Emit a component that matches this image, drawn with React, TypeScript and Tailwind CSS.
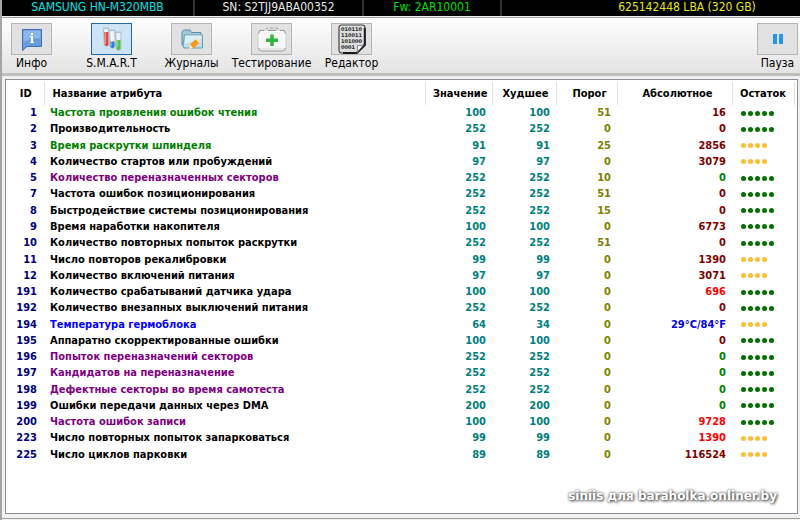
import type { ReactNode } from 'react'

type Row = {
  id: number
  name: string
  tone?: 'green' | 'purple' | 'blue'
  value: number
  worst: number
  threshold: number
  raw: string
  rawTone?: 'green' | 'red' | 'blue'
  dots: 4 | 5
}

const rows: Row[] = [
  { id: 1, name: 'Частота проявления ошибок чтения', tone: 'green', value: 100, worst: 100, threshold: 51, raw: '16', dots: 5 },
  { id: 2, name: 'Производительность', value: 252, worst: 252, threshold: 0, raw: '0', dots: 5 },
  { id: 3, name: 'Время раскрутки шпинделя', tone: 'green', value: 91, worst: 91, threshold: 25, raw: '2856', dots: 4 },
  { id: 4, name: 'Количество стартов или пробуждений', value: 97, worst: 97, threshold: 0, raw: '3079', dots: 4 },
  { id: 5, name: 'Количество переназначенных секторов', tone: 'purple', value: 252, worst: 252, threshold: 10, raw: '0', rawTone: 'green', dots: 5 },
  { id: 7, name: 'Частота ошибок позиционирования', value: 252, worst: 252, threshold: 51, raw: '0', dots: 5 },
  { id: 8, name: 'Быстродействие системы позиционирования', value: 252, worst: 252, threshold: 15, raw: '0', dots: 5 },
  { id: 9, name: 'Время наработки накопителя', value: 100, worst: 100, threshold: 0, raw: '6773', dots: 5 },
  { id: 10, name: 'Количество повторных попыток раскрутки', value: 252, worst: 252, threshold: 51, raw: '0', dots: 5 },
  { id: 11, name: 'Число повторов рекалибровки', value: 99, worst: 99, threshold: 0, raw: '1390', dots: 4 },
  { id: 12, name: 'Количество включений питания', value: 97, worst: 97, threshold: 0, raw: '3071', dots: 4 },
  { id: 191, name: 'Количество срабатываний датчика удара', value: 100, worst: 100, threshold: 0, raw: '696', rawTone: 'red', dots: 5 },
  { id: 192, name: 'Количество внезапных выключений питания', value: 252, worst: 252, threshold: 0, raw: '0', dots: 5 },
  { id: 194, name: 'Температура гермоблока', tone: 'blue', value: 64, worst: 34, threshold: 0, raw: '29°C/84°F', rawTone: 'blue', dots: 4 },
  { id: 195, name: 'Аппаратно скорректированные ошибки', value: 100, worst: 100, threshold: 0, raw: '0', dots: 5 },
  { id: 196, name: 'Попыток переназначений секторов', tone: 'purple', value: 252, worst: 252, threshold: 0, raw: '0', rawTone: 'green', dots: 5 },
  { id: 197, name: 'Кандидатов на переназначение', tone: 'purple', value: 252, worst: 252, threshold: 0, raw: '0', rawTone: 'green', dots: 5 },
  { id: 198, name: 'Дефектные секторы во время самотеста', tone: 'purple', value: 252, worst: 252, threshold: 0, raw: '0', rawTone: 'green', dots: 5 },
  { id: 199, name: 'Ошибки передачи данных через DMA', value: 200, worst: 200, threshold: 0, raw: '0', rawTone: 'green', dots: 5 },
  { id: 200, name: 'Частота ошибок записи', tone: 'purple', value: 100, worst: 100, threshold: 0, raw: '9728', rawTone: 'red', dots: 5 },
  { id: 223, name: 'Число повторных попыток запарковаться', value: 99, worst: 99, threshold: 0, raw: '1390', rawTone: 'red', dots: 4 },
  { id: 225, name: 'Число циклов парковки', value: 89, worst: 89, threshold: 0, raw: '116524', dots: 4 },
]

const nameTones = {
  green: 'text-[#008000]',
  purple: 'text-[#800080]',
  blue: 'text-[#0000ff]',
}

const rawTones = {
  green: 'text-[#008000]',
  red: 'text-[#ff0000]',
  blue: 'text-[#0000e0]',
}

const InfoIcon = () => (
  <svg viewBox="0 0 22 24" className="h-6 w-[22px]">
    <path d="M1.500 2.500h19v17H6l-4.500 4z" fill="#6a9bdc" stroke="#3d6db4" />
    <path d="M2.500 3.500h17v8Q11 10 2.500 15z" fill="#8cb5ea" />
    <path d="M10 6h2v2h-2zM9 9h3v6h1v1H9v-1h1v-5H9z" fill="#fff" />
  </svg>
)

const TubesIcon = () => (
  <svg viewBox="0 0 20 24" className="h-6 w-5">
    <g fill="#eef2f8" stroke="#a5b0c2" strokeWidth="0.8">
      <path d="M1.500 1.500h5l.5 15.500a2.400 2.400 0 0 1-4.800 0z" />
      <path d="M7.800 3.500h5l.2 15.500a2.400 2.400 0 0 1-4.800 0z" />
      <path d="M14 5.500h5l-.1 15.500a2.400 2.400 0 0 1-4.800 0z" />
    </g>
    <path d="M2.200 5h4l.3 12a1.900 1.900 0 0 1-3.800 0z" fill="#dc4a3a" />
    <path d="M8.500 14.500h4v4.500a1.900 1.900 0 0 1-4 0z" fill="#2b78d6" />
    <path d="M14.500 13h4v8a1.900 1.900 0 0 1-4 0z" fill="#4cc44c" />
    <path d="M1 1.200h6M7.300 3.200h6M13.500 5.200h6" stroke="#b4becd" strokeWidth="1.400" />
    <path d="M3.500 3v14M9.700 5v14M15.700 7v13" stroke="#fff" strokeOpacity="0.4" />
  </svg>
)

const FolderIcon = () => (
  <svg viewBox="0 0 24 24" className="size-6">
    <path d="M2 18V5l1.500-2H10l1.500 2.500h9.500V18z" fill="#a3c9d6" stroke="#5a8ea3" />
    <path d="M4.500 8h18v13H4l-1-2z" fill="#bfe0ea" stroke="#5f9db3" />
    <path d="M5 8.500h17v3L5 17z" fill="#dceff4" />
    <path d="m9 22 1.500-5 6-5.500 3.500 3.500-6 6z" fill="#f79a1c" />
    <path d="m15.500 12.500 1.800-1.700 3.500 3.500-1.800 1.700z" fill="#fbe3c3" />
    <path d="m9 22 1.200-4 2.800 3z" fill="#fff3dc" />
  </svg>
)

const MedkitIcon = () => (
  <svg viewBox="0 0 30 26" className="h-[26px] w-[30px]">
    <path d="M8.500 4.500 10 2h10l1.500 2.500" fill="none" stroke="#a5a5a5" strokeDasharray="4 1.500" />
    <rect x="1" y="4" width="28" height="21" rx="3" fill="#f6f6f6" stroke="#d0d0d0" />
    <path d="M1.500 7.500 3 4.500h4m4 0h8m4 0h4l1.500 3" fill="none" stroke="#9a9a9a" />
    <path d="M1.500 22q.5 3 3 3h21q2.500 0 3-3" fill="#e8e8e8" stroke="#a8a8a8" />
    <path d="M13.200 8.500h3.600v4h4.200v3.600h-4.200v4h-3.600v-4H9v-3.600h4.200z" fill="#32b540" />
  </svg>
)

const BinaryIcon = () => (
  <svg viewBox="0 0 28 30" className="h-[30px] w-7">
    <path d="M4 1h20q3 0 3 3v17l-8 8H4q-3 0-3-3V4q0-3 3-3z" fill="#dedede" stroke="#454545" strokeWidth="1.200" />
    <path d="M26.800 4v17l-8 8H5" fill="none" stroke="#1c1c1c" strokeWidth="2" />
    <g fill="#1e1e1e" fontFamily="'DejaVu Sans', sans-serif" fontWeight="bold" fontSize="5">
      <text x="3" y="7">010110</text>
      <text x="3" y="13">110011</text>
      <text x="3" y="19">101000</text>
      <text x="3" y="25">0001</text>
    </g>
    <path d="M18.500 28.500q2-3 1-7 4 1 6.500-1l-7 8z" fill="#fff" stroke="#555" strokeWidth="0.700" />
  </svg>
)

const PauseIcon = () => (
  <svg viewBox="0 0 12 12" className="size-3">
    <path d="M1 1h4v10H1zM7 1h4v10H7z" fill="#2196f3" />
  </svg>
)

type ToolButtonProps = { label: string; active?: boolean; children: ReactNode }

const ToolButton = ({ label, active, children }: ToolButtonProps) => (
  <button type="button" className="flex w-[41px] flex-col items-center">
    <span
      className={
        active
          ? 'flex h-8 w-full items-center justify-center border border-[#2466a0] bg-[#cde4f7]'
          : 'flex h-8 w-full items-center justify-center border border-[#b4b4b4] bg-[#e1e1e1]'
      }
    >
      {children}
    </span>
    <span className="text-[12px] leading-4 whitespace-nowrap">{label}</span>
  </button>
)

// Remaining health, one dot per 20%
const HealthDots = ({ count }: { count: 4 | 5 }) => (
  <div role="img" aria-label={`${count} / 5`} className="flex gap-0.5">
    {Array.from({ length: count }, (_, i) => (
      <span key={i} className={`size-[5px] rounded-full ${count === 5 ? 'bg-[#007000]' : 'bg-[#ffc030]'}`} />
    ))}
  </div>
)

const headCell = 'border-r border-[#e2e2e2] p-0 font-bold'

export default function App() {
  return (
    <div className="flex h-screen flex-col border-l-2 border-[#a9a5a3] bg-[#f0f0f0] font-['DejaVu_Sans_Condensed','DejaVu_Sans',sans-serif] text-black">
      <header className="grid h-4 shrink-0 grid-cols-[193fr_169fr_138fr_298fr] bg-black text-[12px] leading-[15px]">
        <span className="border-r-2 border-[#333] text-center text-[#00e5e5]">SAMSUNG HN-M320MBB</span>
        <span className="border-r-2 border-[#333] text-center text-[#e8e8e8]">SN: S2TJJ9ABA00352</span>
        <span className="border-r-2 border-[#333] text-center text-[#00e000]">Fw: 2AR10001</span>
        <span className="pl-[72px] text-center text-[#e8e800]">625142448 LBA (320 GB)</span>
      </header>

      <nav className="mt-px flex shrink-0 justify-between border-t border-b-[3px] border-t-[#a0a0a0] border-b-[#bdbdbd] bg-linear-to-b from-white to-[#e3e3e3] pt-[5px] pr-0.5 pb-0.5 pl-[9px]">
        <div className="flex gap-[39px]">
          <ToolButton label="Инфо"><InfoIcon /></ToolButton>
          <ToolButton label="S.M.A.R.T" active><TubesIcon /></ToolButton>
          <ToolButton label="Журналы"><FolderIcon /></ToolButton>
          <ToolButton label="Тестирование"><MedkitIcon /></ToolButton>
          <ToolButton label="Редактор"><BinaryIcon /></ToolButton>
        </div>
        <ToolButton label="Пауза"><PauseIcon /></ToolButton>
      </nav>

      <main className="relative mt-[3px] mr-0.5 mb-1 ml-[3px] flex-1 border border-[#8b8f99] bg-white pt-0.5">
        <table className="h-[381px] w-full table-fixed border-collapse text-[11px] leading-4 font-bold">
          <colgroup>
            <col className="w-[38px]" />
            <col />
            <col className="w-[67px]" />
            <col className="w-[64px]" />
            <col className="w-[61px]" />
            <col className="w-[115px]" />
            <col className="w-[62px]" />
            <col className="w-[3px]" />
          </colgroup>
          <thead>
            <tr className="h-[23px]">
              <th className={`${headCell} pl-0.5 text-center`}>ID</th>
              <th className={`${headCell} pl-2 text-left`}>Название атрибута</th>
              <th className={`${headCell} pr-1 text-right`}>Значение</th>
              <th className={`${headCell} pr-[7px] text-right`}>Худшее</th>
              <th className={`${headCell} pl-1.5 text-center`}>Порог</th>
              <th className={`${headCell} pl-1.5 text-center`}>Абсолютное</th>
              <th className={`${headCell} text-center`}>Остаток</th>
              <th className="p-0" />
            </tr>
          </thead>
          <tbody>
            {rows.map((row) => (
              <tr key={row.id} className="h-4">
                <td className="p-0 pr-[7px] text-right text-[#000080]">{row.id}</td>
                <td className={`p-0 pl-[6px] whitespace-nowrap ${row.tone ? nameTones[row.tone] : 'text-black'}`}>{row.name}</td>
                <td className="p-0 pr-1.5 text-right text-[#008080]">{row.value}</td>
                <td className="p-0 pr-1.5 text-right text-[#008080]">{row.worst}</td>
                <td className="p-0 pr-1.5 text-right text-[#808000]">{row.threshold}</td>
                <td className={`p-0 pr-1.5 text-right ${row.rawTone ? rawTones[row.rawTone] : 'text-[#800000]'}`}>{row.raw}</td>
                <td className="p-0 pl-[9px]">
                  <HealthDots count={row.dots} />
                </td>
                <td className="p-0" />
              </tr>
            ))}
          </tbody>
        </table>
        <p className="absolute right-5 bottom-[9px] font-['DejaVu_Sans',sans-serif] text-[12px] leading-4 font-bold text-white [text-shadow:0_0_3px_#444,1px_1px_3px_#444]">
          siniis для baraholka.onliner.by
        </p>
      </main>
      <footer className="h-0.5 shrink-0 border-t border-[#a0a0a0]" />
    </div>
  )
}
